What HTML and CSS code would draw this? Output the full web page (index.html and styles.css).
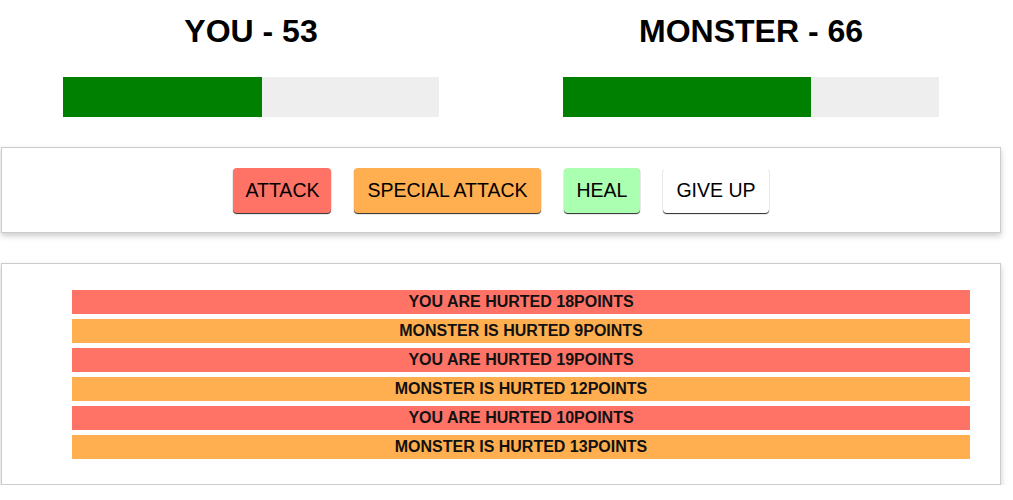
FILE: index.html
```html
<!DOCTYPE html>
<html lang="en">
<head>
<meta charset="utf-8">
<title>Monster Slayer</title>
<link rel="stylesheet" href="styles.css">
</head>
<body>
<div class="app">
  <section class="row stats">
    <div class="col">
      <h1 class="name">YOU - 53</h1>
      <div class="healthbar"><div class="health" style="width: 53%"></div></div>
    </div>
    <div class="col">
      <h1 class="name">MONSTER - 66</h1>
      <div class="healthbar"><div class="health" style="width: 66%"></div></div>
    </div>
  </section>
  <section class="panel controls">
    <button class="btn btn-attack">ATTACK</button>
    <button class="btn btn-special">SPECIAL ATTACK</button>
    <button class="btn btn-heal">HEAL</button>
    <button class="btn btn-giveup">GIVE UP</button>
  </section>
  <section class="panel log">
    <ul class="log-list">
      <li class="turn player-hurt">YOU ARE HURTED 18POINTS</li>
      <li class="turn monster-hurt">MONSTER IS HURTED 9POINTS</li>
      <li class="turn player-hurt">YOU ARE HURTED 19POINTS</li>
      <li class="turn monster-hurt">MONSTER IS HURTED 12POINTS</li>
      <li class="turn player-hurt">YOU ARE HURTED 10POINTS</li>
      <li class="turn monster-hurt">MONSTER IS HURTED 13POINTS</li>
    </ul>
  </section>
</div>
</body>
</html>
```

FILE: styles.css
```css
html, body {
  margin: 0;
  padding: 0;
  background: #ffffff;
}

body {
  font-family: "Liberation Sans", Arial, sans-serif;
  color: #000;
}

.app {
  width: 1000px;
  margin-left: 1px;
  padding-top: 13px;
}

.row {
  display: flex;
}

.col {
  flex: 1 1 0;
  padding: 0 15px;
  text-align: center;
}

.name {
  margin: 0 0 28px;
  font-size: 32px;
  line-height: 36px;
  font-weight: bold;
  color: #000;
}

.healthbar {
  width: 80%;
  height: 40px;
  margin: 0 auto;
  background-color: #eeeeee;
  display: flex;
}

.health {
  height: 100%;
  background-color: #008000;
}

.panel {
  margin-top: 30px;
  border: 1px solid #cccccc;
  box-shadow: 0 3px 6px #cccccc;
  padding: 10px;
}

.controls {
  display: flex;
  justify-content: center;
  gap: 23px;
  padding: 20px 10px 19px;
}

.btn {
  font-family: "Liberation Sans", Arial, sans-serif;
  font-size: 19.5px;
  line-height: 21px;
  padding: 12px 13px;
  border: none;
  border-radius: 4px;
  box-shadow: 0 1px 1px rgba(0, 0, 0, 0.85);
  color: #000;
  cursor: pointer;
}

.btn-attack { background-color: #ff7367; padding: 12px 12px; }
.btn-special { background-color: #ffaf4f; }
.btn-heal { background-color: #aaffb0; }
.btn-giveup { background-color: #ffffff; }

.log {
  padding: 26px 30px 25px 25px;
}

.log-list {
  list-style: none;
  margin: 0;
  padding: 0 0 0 45px;
  display: flex;
  flex-direction: column;
  gap: 5px;
}

.turn {
  font-size: 16px;
  line-height: 24px;
  font-weight: bold;
  text-transform: uppercase;
  text-align: center;
  color: #111;
}

.player-hurt { background-color: #ff7367; }
.monster-hurt { background-color: #ffaf4f; }
```
